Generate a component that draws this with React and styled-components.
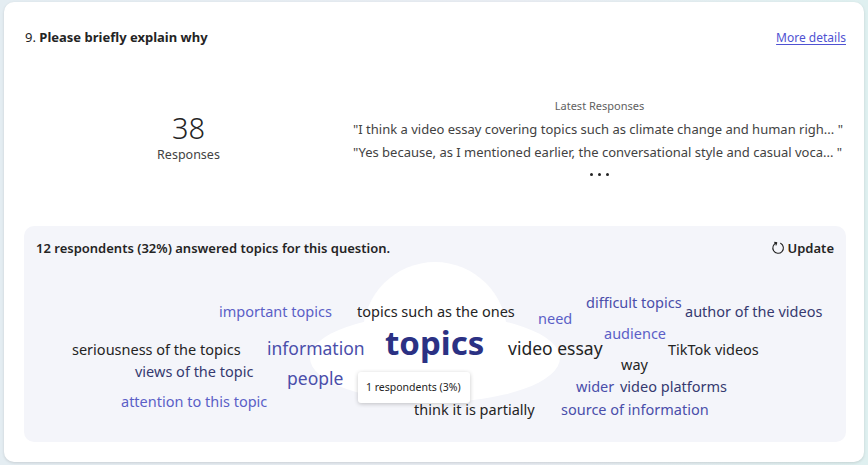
import React from 'react'
import styled, { createGlobalStyle } from 'styled-components'

const GlobalStyle = createGlobalStyle`
  html, body {
    margin: 0;
    padding: 0;
  }
  body {
    background: linear-gradient(90deg, #e4edf2 0%, #e9edf3 60%, #dff0f0 100%);
    font-family: "Segoe UI", "Noto Sans", "Open Sans", sans-serif;
    color: #242424;
  }
`

const words = [
  { text: 'important topics', x: 219, y: 311, tone: 'light' },
  { text: 'topics such as the ones', x: 357, y: 311, tone: 'dark' },
  { text: 'need', x: 538, y: 318, tone: 'light' },
  { text: 'difficult topics', x: 586, y: 302, tone: 'medium' },
  { text: 'author of the videos', x: 685, y: 311, tone: 'navy' },
  { text: 'seriousness of the topics', x: 72, y: 349, tone: 'dark' },
  { text: 'information', x: 267, y: 348, tone: 'medium', size: 17.5 },
  { text: 'topics', x: 385, y: 343, tone: 'big', size: 33 },
  { text: 'video essay', x: 508, y: 348, tone: 'dark', size: 17.5 },
  { text: 'audience', x: 604, y: 333, tone: 'light' },
  { text: 'TikTok videos', x: 668, y: 349, tone: 'dark' },
  { text: 'way', x: 621, y: 364, tone: 'dark' },
  { text: 'views of the topic', x: 135, y: 371, tone: 'navy' },
  { text: 'people', x: 287, y: 378, tone: 'medium', size: 17.5 },
  { text: 'wider', x: 576, y: 386, tone: 'medium' },
  { text: 'video platforms', x: 620, y: 386, tone: 'navy' },
  { text: 'attention to this topic', x: 121, y: 401, tone: 'light' },
  { text: 'think it is partially', x: 414, y: 409, tone: 'dark' },
  { text: 'source of information', x: 561, y: 409, tone: 'medium' },
]

const tones = {
  light: '#5b5fc7',
  medium: '#4a4eaa',
  navy: '#363a70',
  dark: '#242424',
  big: '#2b3184',
}

// top-left of the word canvas in page coords
const CX = 24
const CY = 258

const App = () => {
  return (
    <>
      <GlobalStyle />
      <Page>
        <Card>
          <Header>
            <Question>
              9. <strong>Please briefly explain why</strong>
            </Question>
            <DetailsLink href="#">More details</DetailsLink>
          </Header>

          <Stats>
            <Count>
              <Big>38</Big>
              <Label>Responses</Label>
            </Count>
            <Latest>
              <LatestTitle>Latest Responses</LatestTitle>
              <Quote>"I think a video essay covering topics such as climate change and human righ... "</Quote>
              <Quote>"Yes because, as I mentioned earlier, the conversational style and casual voca... "</Quote>
              <More>
                <Dot />
                <Dot />
                <Dot />
              </More>
            </Latest>
          </Stats>

          <Panel>
            <PanelHead>
              <PanelTitle>12 respondents (32%) answered topics for this question.</PanelTitle>
              <UpdateButton>
                <svg width="14" height="14" viewBox="0 0 14 14" fill="none">
                  <path
                    d="M5.6 1.9 A5.3 5.3 0 1 0 9.6 2.3"
                    stroke="#242424"
                    strokeWidth="1.1"
                    strokeLinecap="round"
                  />
                  <path
                    d="M3.6 1.3 L5.7 1.9 L5.0 4.0"
                    stroke="#242424"
                    strokeWidth="1.1"
                    strokeLinecap="round"
                    strokeLinejoin="round"
                  />
                </svg>
                Update
              </UpdateButton>
            </PanelHead>

            <Cloud>
              <CloudShape width="260" height="150" viewBox="0 0 260 150">
                <circle cx="130" cy="78" r="72" fill="#fff" />
                <ellipse cx="130" cy="102" rx="125" ry="44" fill="#fff" />
              </CloudShape>
              {words.map((w) => {
                const size = w.size || 14.5
                return (
                  <Word
                    key={w.text}
                    $tone={w.tone}
                    $size={size}
                    style={{ left: w.x - CX, top: w.y - CY - size * 0.7 }}
                  >
                    {w.text}
                  </Word>
                )
              })}
              <Tooltip>1 respondents (3%)</Tooltip>
            </Cloud>
          </Panel>
        </Card>
      </Page>
    </>
  )
}

const Page = styled.div`
  width: 868px;
  height: 465px;
  padding: 2px 4px 3px 4px;
  box-sizing: border-box;
`

const Card = styled.div`
  background: #fff;
  border-radius: 10px;
  box-shadow: 0 1px 3px rgba(0, 0, 0, 0.13);
  height: 460px;
  padding: 0 18px 0 20px;
  box-sizing: border-box;
  display: flex;
  flex-direction: column;
`

const Header = styled.div`
  display: flex;
  justify-content: space-between;
  align-items: center;
  height: 70px;
`

const Question = styled.div`
  font-size: 13px;
  padding-left: 1px;
  color: #242424;
  strong {
    font-weight: 700;
  }
`

const DetailsLink = styled.a`
  font-size: 12px;
  color: #4f52d2;
  text-decoration: underline;
  text-underline-offset: 2px;
`

const Stats = styled.div`
  display: grid;
  grid-template-columns: 329px 1fr;
  height: 154px;
  align-items: start;
`

const Count = styled.div`
  display: flex;
  flex-direction: column;
  align-items: center;
  padding-top: 39px;
`

const Big = styled.div`
  font-size: 29px;
  font-weight: 300;
  line-height: 34px;
  color: #242424;
`

const Label = styled.div`
  font-size: 12.5px;
  line-height: 20px;
  color: #424242;
`

const Latest = styled.div`
  display: flex;
  flex-direction: column;
  align-items: center;
  padding-top: 26px;
`

const LatestTitle = styled.div`
  font-size: 11px;
  line-height: 16px;
  color: #616161;
  margin-bottom: 4px;
`

const Quote = styled.div`
  font-size: 13px;
  line-height: 23px;
  color: #424242;
  white-space: nowrap;
  align-self: flex-start;
`

const More = styled.div`
  display: flex;
  gap: 5px;
  padding-top: 9px;
`

const Dot = styled.span`
  width: 3px;
  height: 3px;
  border-radius: 50%;
  background: #242424;
`

const Panel = styled.div`
  background: #f4f5fa;
  border-radius: 10px;
  height: 216px;
  display: flex;
  flex-direction: column;
  overflow: hidden;
`

const PanelHead = styled.div`
  display: flex;
  justify-content: space-between;
  align-items: center;
  padding: 12px 12px 0 12px;
  height: 20px;
`

const PanelTitle = styled.div`
  font-size: 13px;
  font-weight: 600;
  color: #242424;
`

const UpdateButton = styled.button`
  display: flex;
  align-items: center;
  gap: 3px;
  border: none;
  background: none;
  padding: 0;
  font-family: inherit;
  font-size: 13px;
  font-weight: 600;
  color: #242424;
`

const Cloud = styled.div`
  position: relative;
  flex: 1;
`

const CloudShape = styled.svg`
  position: absolute;
  left: ${305 - CX}px;
  top: ${256 - CY}px;
`

const Word = styled.span`
  position: absolute;
  white-space: nowrap;
  line-height: 1.4;
  font-size: ${(p) => p.$size}px;
  font-weight: ${(p) => (p.$tone === 'big' ? 700 : 400)};
  color: ${(p) => tones[p.$tone]};
`

const Tooltip = styled.div`
  position: absolute;
  left: ${358 - CX}px;
  top: ${372 - CY}px;
  width: 112px;
  height: 31px;
  box-sizing: border-box;
  background: #fff;
  border-radius: 3px;
  box-shadow: 0 1px 4px rgba(0, 0, 0, 0.22);
  font-size: 10.5px;
  line-height: 31px;
  padding-left: 8px;
  color: #242424;
`

export default App
